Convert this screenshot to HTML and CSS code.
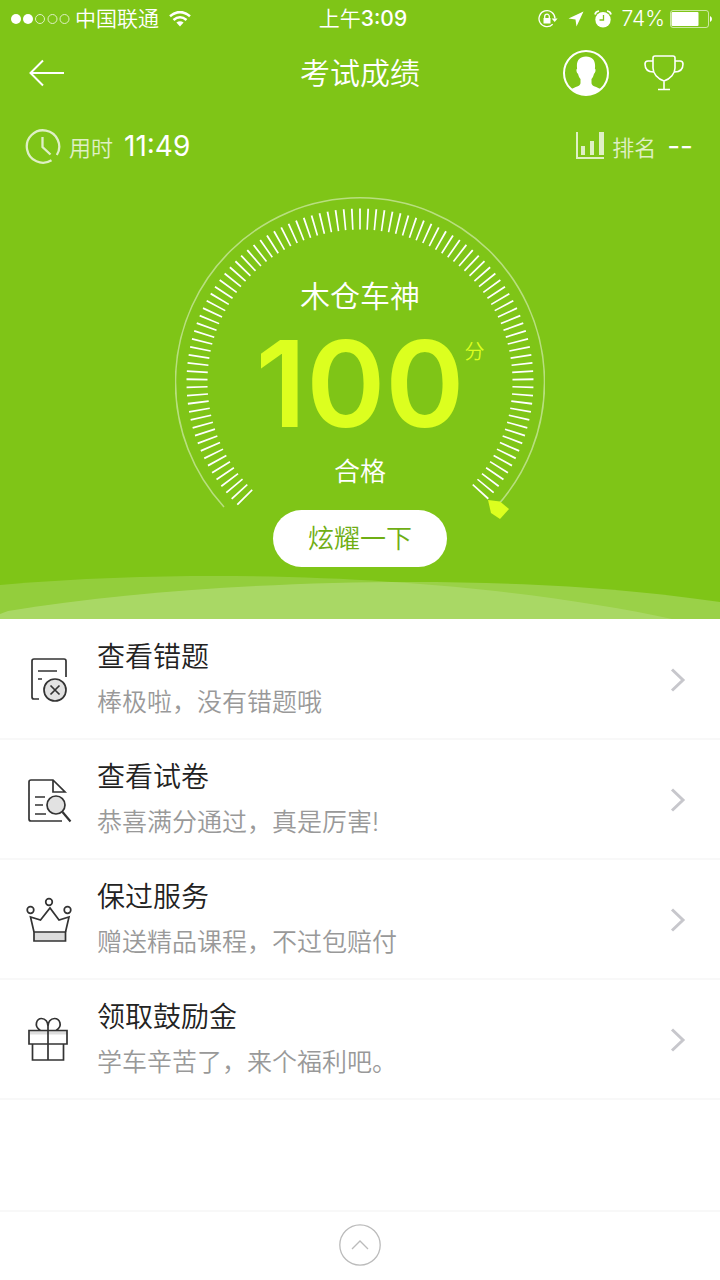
FILE: index.html
```html
<!DOCTYPE html>
<html lang="zh-CN">
<head>
<meta charset="utf-8">
<meta name="viewport" content="width=device-width, initial-scale=1">
<title>考试成绩</title>
<link rel="stylesheet" href="styles.css">
</head>
<body>
<header class="hero">
  <div class="status">
    <div class="status-left">
      <svg width="60" height="12" viewBox="0 0 60 12" fill="none" stroke="#fff"><circle cx="6" cy="6" r="5" fill="#fff" stroke="none"/><circle cx="18" cy="6" r="5" fill="#fff" stroke="none"/><g opacity=".75"><circle cx="30" cy="6" r="4.5"/><circle cx="42.500" cy="6" r="4.500"/><circle cx="54.500" cy="6" r="4.500"/></g></svg>
      <span>中国联通</span>
      <svg class="wifi" width="22" height="16" viewBox="0 0 22 16" fill="none" stroke="#fff" stroke-width="2.600"><path d="M1 5.200Q11-3 21 5.200M4.500 9Q11 3.500 17.500 9"/><path d="M7.400 11.600Q11 8.700 14.600 11.600L11 15.500Z" fill="#fff" stroke="none"/></svg>
    </div>
    <time class="status-time">上午<b>3:09</b></time>
    <div class="status-right">
      <svg width="20" height="18" viewBox="0 0 20 18" fill="none" stroke="#fff" stroke-width="1.300"><path d="M14.700 14.300A8 8 0 1 1 17 8.500"/><path d="M13.600 8.500h6L16.700 12Z" fill="#fff" stroke="none"/><rect x="5.500" y="8" width="7" height="5.500" fill="#fff" stroke="none"/><path d="M6.700 8V6.500a2.300 2.300 0 0 1 4.600 0V8"/></svg>
      <svg width="16" height="16" viewBox="0 0 16 16" fill="#fff"><path d="M15.500.5 8.500 15.500 7.500 8.500.500 7.500Z"/></svg>
      <svg width="18" height="18" viewBox="0 0 18 18" fill="#fff"><circle cx="9" cy="9.800" r="7.700"/><path d="M1 4.500Q1.500 1.500 5 1M17 4.500Q16.500 1.500 13 1" fill="none" stroke="#fff" stroke-width="1.700"/><path d="M9.500 5v5H5.500" fill="none" stroke="#7fc517" stroke-width="1.300"/></svg>
      <span>74%</span>
      <svg class="battery" width="42" height="18" viewBox="0 0 42 18"><rect x=".500" y=".500" width="38" height="17" rx="2.500" fill="none" stroke="#fff" stroke-opacity=".6"/><rect x="1.500" y="2" width="27" height="14" rx="1" fill="#fff"/><path d="M40 6q2 1 2 3t-2 3Z" fill="#fff"/></svg>
    </div>
  </div>

  <nav class="nav">
    <button class="icon-button back" aria-label="返回"><svg width="36" height="28" viewBox="0 0 36 28" fill="none" stroke="#fff" stroke-width="2"><path d="M14 1.500 1.500 14 14 26.500M1.500 14H35"/></svg></button>
    <h1 class="title">考试成绩</h1>
    <div class="nav-actions">
      <button class="icon-button" aria-label="个人"><svg width="46" height="46" viewBox="0 0 46 46"><circle cx="23" cy="23" r="22" fill="none" stroke="#fff" stroke-width="2"/><path d="M23 6.500c6 0 9.200 3.600 9.100 9.200 0 1.300-.1 2.200-.2 3 1.100.3.800 3.600-.9 5-.5 2.300-1.300 4-2.500 5.200v4.300c.3 3.200 5.500 3.500 9.300 6.100Q32 45 23 45T8.200 39.300C12 36.700 17.200 36.400 17.500 33.200v-4.300c-1.200-1.200-2-2.900-2.500-5.200-1.700-1.400-2-4.700-.9-5-.1-.8-.2-1.700-.2-3C13.800 10.100 17 6.500 23 6.500Z" fill="#fff"/></svg></button>
      <button class="icon-button" aria-label="奖杯"><svg width="40" height="36" viewBox="0 0 40 36" fill="none" stroke="#fff" stroke-width="1.600"><path d="M11 1h18q2 0 2 2v10c0 5.500-4.500 11-11 13C13.500 24 9 18.500 9 13V3q0-2 2-2ZM9 6H4Q1 6 1 9c0 5 3 8 8.500 8M31 6h5q3 0 3 3c0 5-3 8-8.500 8M20 26v8.500M14 34.500h12"/></svg></button>
    </div>
  </nav>

  <div class="stats">
    <div class="stat">
      <svg width="36" height="36" viewBox="0 0 36 36" fill="none" stroke="#fff" stroke-width="2.300"><path d="M26.500 32.300A16.200 16.200 0 1 1 31.800 27M17.500 9v10l8 7.500"/></svg>
      <span class="stat-label">用时</span>
      <strong class="stat-value">11:49</strong>
    </div>
    <div class="stat">
      <svg width="28" height="28" viewBox="0 0 28 28" fill="#fff"><path d="M0 0h2v25h26v2H0Z"/><path d="M5 14h4v9H5ZM14 9h4v14h-4ZM23 0h5v23h-5Z"/></svg>
      <span class="stat-label">排名</span>
      <strong class="stat-value">--</strong>
    </div>
  </div>

  <section class="gauge">
    <svg class="dial" width="370" height="324" viewBox="-185 -185 370 324" fill="none">
      <path d="M-136 125A184.500 184.500 0 1 1 136 125" stroke="#fff" stroke-opacity=".45" stroke-width="1.600"/>
      <path d="M-114.650 115.860A163 163 0 1 1 119.980 110.330" stroke="#fff" stroke-width="21" pathLength="267.900" stroke-dasharray=".6 2.100"/>
      <path d="M128 118 140 119.500 149 127 140 137 131 131Z" fill="#dcff1f"/>
    </svg>
    <p class="rank">木仓车神</p>
    <p class="score">100<span class="unit">分</span></p>
    <p class="result">合格</p>
    <button class="share">炫耀一下</button>
  </section>

  <svg class="waves" viewBox="0 0 720 44" preserveAspectRatio="none" fill="#fff"><path d="M0 10C80 3 150 1 215 1C400 1 560 20 672 44H0Z" fill-opacity=".16"/><path d="M0 44V39L8 36C130 16 280 7 410 7C540 7 640 15 720 27V44Z" fill-opacity=".21"/></svg>
</header>

<main class="list">
  <a class="row" href="#wrong">
    <svg class="row-icon" width="48" height="48" viewBox="0 0 48 48" fill="none" stroke="#333" stroke-width="1.700"><path d="M15 43H10q-2 0-2-2V5q0-2 2-2h30q2 0 2 2v16M14 15h19M14 23h4"/><circle cx="31" cy="34" r="11" fill="#e2e2e2"/><path d="m26.500 29.500 9 9m0-9-9 9"/></svg>
    <span class="row-text"><span class="row-title">查看错题</span><span class="row-note">棒极啦，没有错题哦</span></span>
    <svg class="chevron" width="16" height="24" viewBox="0 0 16 24"><path d="M2 1.500 13 12 2 22.500"/></svg>
  </a>
  <a class="row" href="#paper">
    <svg class="row-icon" width="48" height="48" viewBox="0 0 48 48" fill="none" stroke="#333" stroke-width="1.700"><path d="M38 45H7q-2 0-2-2V6q0-2 2-2h22L41 16H29V4M11 21h10M11 29h8M11 38h11"/><circle cx="32" cy="29" r="9" fill="#e2e2e2"/><path d="m38.500 36 8 9.500" stroke-width="2.200"/></svg>
    <span class="row-text"><span class="row-title">查看试卷</span><span class="row-note">恭喜满分通过，真是厉害!</span></span>
    <svg class="chevron" width="16" height="24" viewBox="0 0 16 24"><path d="M2 1.500 13 12 2 22.500"/></svg>
  </a>
  <a class="row" href="#service">
    <svg class="row-icon" width="48" height="48" viewBox="0 0 48 48" fill="none" stroke="#333" stroke-width="1.700"><path d="m10 36-3.500-15 10 3L26 12l9 12 10-3-3.500 15"/><path d="M10 36h31.500v9H10Z" fill="#ddd"/><circle cx="6.500" cy="14" r="3.300"/><circle cx="25" cy="6" r="3.300"/><circle cx="43.500" cy="14" r="3.300"/></svg>
    <span class="row-text"><span class="row-title">保过服务</span><span class="row-note">赠送精品课程，不过包赔付</span></span>
    <svg class="chevron" width="16" height="24" viewBox="0 0 16 24"><path d="M2 1.500 13 12 2 22.500"/></svg>
  </a>
  <a class="row" href="#reward">
    <svg class="row-icon" width="48" height="48" viewBox="0 0 48 48" fill="none" stroke="#333" stroke-width="1.700"><path d="M6 15h37v3.500H6Z" fill="#ddd" stroke="none"/><path d="M5 14.500h38V28H5ZM8.500 28h31v16h-31ZM24 10v34M16.500 14.500C9 10 13 2.500 17.500 2.500c4 0 6.500 3.500 6.500 7.500 0-4 2.500-7.500 6.500-7.500 5 0 9 7.500 1.500 12"/></svg>
    <span class="row-text"><span class="row-title">领取鼓励金</span><span class="row-note">学车辛苦了，来个福利吧。</span></span>
    <svg class="chevron" width="16" height="24" viewBox="0 0 16 24"><path d="M2 1.500 13 12 2 22.500"/></svg>
  </a>
</main>

<footer class="footer">
  <button class="icon-button" aria-label="展开"><svg width="42" height="42" viewBox="0 0 42 42" fill="none" stroke="#bbb" stroke-width="1.300"><circle cx="21" cy="21" r="20.200"/><path d="m13 25 8-8 8 8"/></svg></button>
</footer>
</body>
</html>
```
FILE: styles.css
```css
* { box-sizing: border-box; }
body {
  margin: 0;
  min-height: 100vh;
  display: flex;
  flex-direction: column;
  background: #fff;
  color: #222;
  font-family: Inter, "Noto Sans CJK SC", sans-serif;
  font-weight: 350;
}
h1, p { margin: 0; font-weight: inherit; }
svg { display: block; flex: none; }
button { font: inherit; border: 0; cursor: pointer; }
.icon-button { padding: 0; background: none; }

.hero {
  position: relative;
  display: flex;
  flex-direction: column;
  padding-bottom: 52px;
  background: #7fc517;
  color: #fff;
}
.status, .nav {
  display: grid;
  grid-template-columns: 1fr auto 1fr;
  align-items: center;
}
.status {
  height: 36px;
  padding: 2px 10px 0;
  font-size: 21px;
  line-height: 34px;
}
.status-left, .status-right { display: flex; align-items: center; }
.status-left { gap: 5px; }
.wifi { margin-left: 5px; }
.status-time { padding-left: 6px; }
.status-time b { font-weight: 500; }
.status-right { justify-content: flex-end; gap: 10px; margin-right: -2px; }
.battery { margin-left: -5px; }

.nav { height: 74px; padding: 0 36px 0 29px; }
.back { justify-self: start; }
.title { padding-left: 7px; font-size: 30px; line-height: 40px; }
.nav-actions { justify-self: end; display: flex; align-items: center; gap: 35px; }

.stats {
  display: flex;
  justify-content: space-between;
  height: 72px;
  padding: 0 27px 0 25px;
}
.stat { display: flex; align-items: center; gap: 8px; }
.stat svg { opacity: .75; }
.stat-label { font-size: 22px; opacity: .75; }
.stat-value { margin-left: 3px; font-size: 28px; font-weight: 400; }

.gauge {
  position: relative;
  display: flex;
  flex-direction: column;
  align-items: center;
  padding-top: 94px;
}
.dial {
  position: absolute;
  top: 15px;
  left: 50%;
  transform: translateX(-50%);
}
.rank { font-size: 30px; line-height: 40px; }
.score {
  position: relative;
  margin-top: 8px;
  color: #dcff1f;
  font-size: 120px;
  line-height: 120px;
  font-weight: 600;
}
.unit {
  position: absolute;
  left: 100%;
  top: 14px;
  font-size: 20px;
  line-height: 28px;
  font-weight: 350;
}
.result { margin-top: 8px; font-size: 26px; line-height: 40px; }
.share {
  position: relative;
  margin-top: 18px;
  padding: 1px 35px 0;
  border-radius: 29px;
  background: #fff;
  color: #6fae14;
  font-size: 26px;
  line-height: 56px;
}
.waves { position: absolute; left: 0; bottom: 0; width: 100%; height: 44px; }

.list { flex: 1; padding-top: 1px; }
.row {
  display: flex;
  align-items: center;
  height: 120px;
  padding: 1px 34px 0 24px;
  border-bottom: 2px solid #f8f8f8;
  color: inherit;
  text-decoration: none;
}
.row-text { flex: 1; display: flex; flex-direction: column; gap: 5px; margin-left: 25px; }
.row-title { font-size: 28px; line-height: 40px; }
.row-note { font-size: 25px; line-height: 40px; color: #999; }
.chevron { fill: none; stroke: #c7c7cc; stroke-width: 3; }

.footer {
  display: flex;
  justify-content: center;
  align-items: center;
  height: 70px;
  padding-bottom: 2px;
  border-top: 2px solid #f8f8f8;
}
```
